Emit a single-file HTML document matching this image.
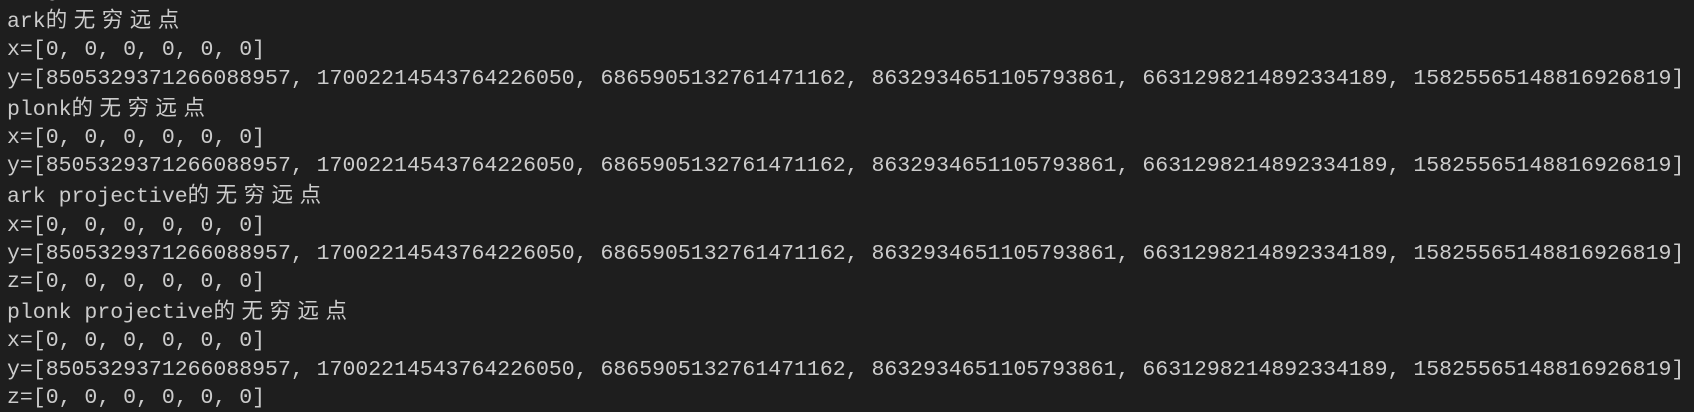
<!DOCTYPE html>
<html><head><meta charset="utf-8"><style>
html,body{margin:0;padding:0;background:#1e1e1e;width:1694px;height:411px;overflow:hidden}
pre{margin:0;position:absolute;left:7px;top:-23px;font-family:"Liberation Mono","Noto Sans CJK SC",monospace;font-size:21.5px;line-height:28.2px;color:#cccccc;white-space:pre}
.c{font-family:"Noto Sans CJK SC","Liberation Sans",sans-serif;letter-spacing:6.5px;font-size:21.5px}
</style></head><body><pre>   g
ark<span class="c">的无穷远点</span>
x=[0, 0, 0, 0, 0, 0]
y=[8505329371266088957, 17002214543764226050, 6865905132761471162, 8632934651105793861, 6631298214892334189, 15825565148816926819]
plonk<span class="c">的无穷远点</span>
x=[0, 0, 0, 0, 0, 0]
y=[8505329371266088957, 17002214543764226050, 6865905132761471162, 8632934651105793861, 6631298214892334189, 15825565148816926819]
ark projective<span class="c">的无穷远点</span>
x=[0, 0, 0, 0, 0, 0]
y=[8505329371266088957, 17002214543764226050, 6865905132761471162, 8632934651105793861, 6631298214892334189, 15825565148816926819]
z=[0, 0, 0, 0, 0, 0]
plonk projective<span class="c">的无穷远点</span>
x=[0, 0, 0, 0, 0, 0]
y=[8505329371266088957, 17002214543764226050, 6865905132761471162, 8632934651105793861, 6631298214892334189, 15825565148816926819]
z=[0, 0, 0, 0, 0, 0]</pre></body></html>
